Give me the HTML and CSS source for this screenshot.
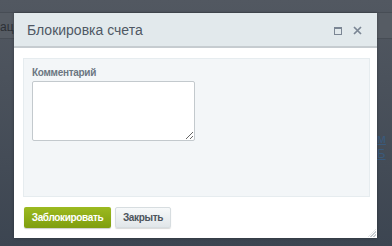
FILE: index.html
```html
<!DOCTYPE html>
<html lang="ru">
<head>
  <meta charset="UTF-8" />
  <title>Блокировка счета</title>
  <link rel="stylesheet" href="styles.css">
</head>
<body>

  <div class="backdrop">
    <div class="page-row"><span class="page-text">аци</span></div>
    <div class="page-link">м Б</div>
  </div>

  <div class="dialog">
    <div class="dialog-head">
      <span class="dialog-title">Блокировка счета</span>
      <div class="dialog-icons">
        <span class="icon-max"></span>
        <svg class="icon-close" width="9" height="9" viewBox="0 0 9 9">
          <path d="M1 1 L8 8 M8 1 L1 8" stroke="#7b8694" stroke-width="1.7" />
        </svg>
      </div>
    </div>

    <div class="dialog-body">
      <div class="form-box">
        <label class="form-label" for="comment">Комментарий</label>
        <textarea id="comment" class="form-text"></textarea>
      </div>
    </div>

    <div class="dialog-buttons">
      <button class="btn btn-green">Заблокировать</button>
      <button class="btn btn-light">Закрыть</button>
    </div>

    <span class="grip"></span>
  </div>

</body>
</html>
```

FILE: styles.css
```css
body {
  margin: 0;
  height: 246px;
  overflow: hidden;
  font-family: 'Liberation Sans', Arial, sans-serif;
  background: linear-gradient(to bottom, #525861, #3c4551);
}

.backdrop {
  height: 246px;
  position: relative;
}

.page-row {
  margin-top: 12px;
  height: 27px;
  border-top: 1px solid #474d55;
  border-bottom: 1px solid #474d55;
  background: #565c64;
  padding-top: 4px;
  box-sizing: border-box;
}

.page-text {
  font-size: 12px;
  color: #2c3036;
}

.page-link {
  position: absolute;
  left: 377px;
  top: 119px;
  font-size: 13px;
  color: #3a5a7c;
  text-decoration: underline;
}

.dialog {
  position: absolute;
  left: 14px;
  top: 13px;
  width: 363px;
  height: 225px;
  background: white;
  box-shadow: 0 0 3px rgba(0,0,0,0.3);
  display: flex;
  flex-direction: column;
}

.dialog-head {
  height: 33px;
  background: #e2e9ec;
  border-bottom: 2px solid #c6ccd0;
  display: flex;
  align-items: center;
  justify-content: space-between;
  padding: 0 15px 0 13px;
}

.dialog-title {
  font-family: 'Liberation Sans', Arial, sans-serif;
  font-size: 14px;
  color: #4f5864;
}

.dialog-icons {
  display: flex;
  align-items: center;
  gap: 11px;
  margin-top: 2px;
}

.icon-max {
  width: 6px;
  height: 5px;
  border: 1.5px solid #7b8694;
  border-top-width: 2px;
}

.dialog-body {
  padding: 10px 7px 0 9px;
}

.form-box {
  height: 139px;
  box-sizing: border-box;
  background: #f3f6f8;
  border: 1px solid #e6ecef;
  padding: 8px 0 0 8px;
}

.form-label {
  display: block;
  font-size: 10px;
  font-weight: bold;
  letter-spacing: -0.3px;
  color: #6c7782;
  margin-bottom: 3px;
}

.form-text {
  display: block;
  width: 163px;
  height: 60px;
  box-sizing: border-box;
  border: 1px solid #c3c9cd;
  border-radius: 2px;
  background: white;
  margin: 0;
}

.dialog-buttons {
  display: flex;
  gap: 4px;
  padding: 10px 0 0 10px;
}

.btn {
  height: 21px;
  padding: 0;
  border-radius: 2px;
  font-family: 'Liberation Sans', Arial, sans-serif;
  font-size: 10px;
  font-weight: bold;
  letter-spacing: -0.35px;
  cursor: pointer;
}

.btn-green {
  width: 87px;
  color: white;
  border: none;
  background: linear-gradient(to bottom, #9cba20, #7f9e0f);
  box-shadow: 0 1px 1px rgba(0,0,0,0.2);
}

.btn-light {
  width: 56px;
  color: #4d545c;
  border: 1px solid #d7dde0;
  background: linear-gradient(to bottom, #f7f9fa, #e1e6e9);
  box-shadow: 0 1px 1px rgba(0,0,0,0.15);
}

.grip {
  position: absolute;
  right: 1px;
  bottom: 1px;
  width: 8px;
  height: 8px;
  background: repeating-linear-gradient(135deg, transparent 0 1px, #c8cdd1 1px 2px);
  clip-path: polygon(100% 0, 100% 100%, 0 100%);
}
```
